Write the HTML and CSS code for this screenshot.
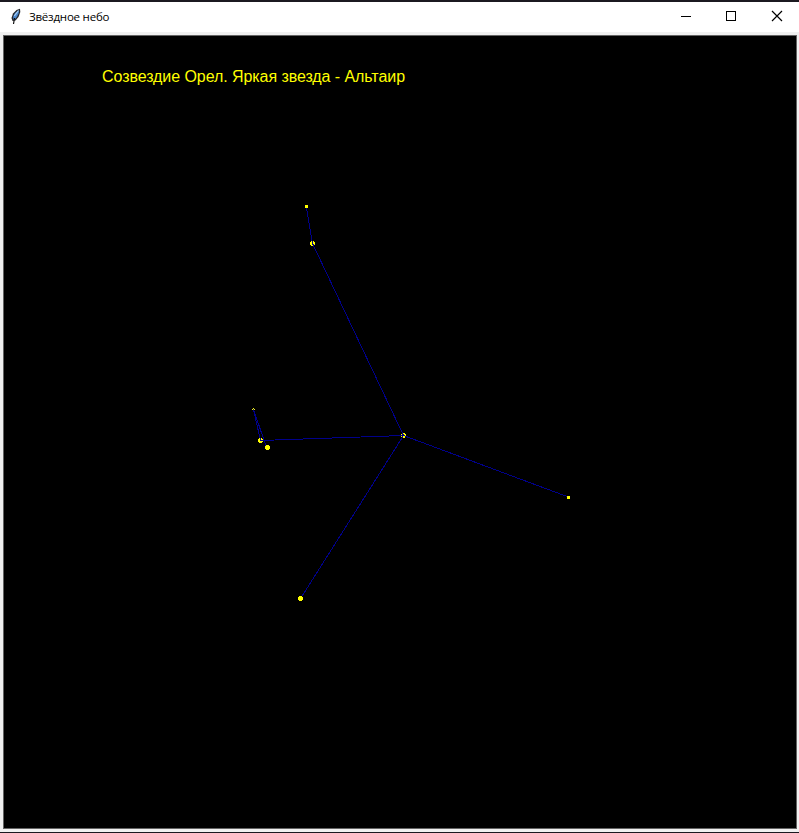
FILE: index.html
```html
<!DOCTYPE html>
<html lang="ru">
<head>
<meta charset="utf-8">
<title>Звёздное небо</title>
<link rel="stylesheet" href="styles.css">
</head>
<body>
<div class="window">
  <header class="titlebar">
    <svg class="feather" width="12" height="18" viewBox="0 0 12 18">
      <path d="M2.5 13 L1.5 10 L3 5.5 L6.5 2 L10 .8 L10.3 4 L8.5 9 L5.5 12.5 Z" fill="#26282e"/>
      <path d="M3.3 11.5 L3.2 8.5 L5 5 L8.8 2.2 L8.8 5 L7 8.8 L4.5 11.8 Z" fill="#4b88cf"/>
      <path d="M4.3 8 L8.5 2.5" stroke="#a9cff2" stroke-width="1.2"/>
      <path d="M4.5 10 L3.5 16" stroke="#111" stroke-width="1.2"/>
    </svg>
    <span class="caption">Звёздное небо</span>
    <div class="controls">
      <svg class="control" width="46" height="30" viewBox="0 0 46 30"><path d="M12 14.5H22" /></svg>
      <svg class="control" width="46" height="30" viewBox="0 0 46 30"><path d="M11.5 9.5H20.5V18.5H11.5Z" /></svg>
      <svg class="control smooth" width="46" height="30" viewBox="0 0 46 30"><path d="M11 9L21 19M21 9L11 19" /></svg>
    </div>
  </header>
  <main class="client">
    <div class="sky">
      <p class="label">Созвездие Орел. Яркая звезда - Альтаир</p>
      <svg class="map" viewBox="4 36 792 792" shape-rendering="crispEdges">
        <g class="stars">
          <rect x="305" y="205" width="3" height="3"/>
          <path d="M311 241h3v1h1v3h-1v1h-3v-1h-1v-3h1z"/>
          <path d="M253 408h1v1h-1zM252 409h1v1h-1zM254 409h1v1h-1z"/>
          <path d="M259 438h3v1h1v3h-1v1h-3v-1h-1v-3h1z"/>
          <path d="M402 433h3v1h1v3h-1v1h-3v-1h-1v-3h1z"/>
          <rect x="567" y="496" width="3" height="3"/>
        </g>
        <g class="lines">
          <path d="M306.5 208L312.5 243.5L403.5 435.5L567 496.5"/>
          <path d="M403.5 435.5L301.5 597"/>
          <path d="M403.5 435.5L260.5 440.5L253.5 409.5L266 446"/>
        </g>
        <g class="stars">
          <path d="M266 445h3v1h1v3h-1v1h-3v-1h-1v-3h1z"/>
          <path d="M299 596h3v1h1v3h-1v1h-3v-1h-1v-3h1z"/>
        </g>
      </svg>
    </div>
  </main>
</div>
</body>
</html>
```
FILE: styles.css
```css
* { box-sizing: border-box; }
body { margin: 0; background: #1b1920; }
.window {
  height: 833px;
  border-top: 2px solid #1b1920;
  border-bottom: 1px solid #1b1920;
  display: flex;
  flex-direction: column;
}
.titlebar {
  height: 30px;
  flex: none;
  padding-left: 10px;
  background: #fff;
  display: flex;
  align-items: center;
}
.feather { margin-top: -1px; }
.caption {
  margin-left: 7px;
  font: 11.5px/16px "Open Sans", "Noto Sans", sans-serif;
  letter-spacing: -0.22px;
  white-space: nowrap;
  color: #000;
}
.controls { margin-left: auto; margin-right: -8px; display: flex; }
.control { fill: none; stroke: #000; stroke-width: 1; shape-rendering: crispEdges; }
.smooth { shape-rendering: auto; stroke-width: 1.2; }
.client { flex: 1; padding: 3px 2px 3px 3px; background: #f0f0f0; }
.sky {
  position: relative;
  width: 794px;
  height: 794px;
  border: 1px solid #646464;
  background: #000;
}
.label {
  margin: 0;
  padding: 32px 0 0 98px;
  font: 16px/18px "Liberation Sans", Arial, sans-serif;
  letter-spacing: -0.065px;
  white-space: nowrap;
  color: #ff0;
}
.map { position: absolute; inset: 0; width: 792px; height: 792px; }
.stars { fill: #ff0; }
.lines { fill: none; stroke: #00008b; stroke-width: 1; }
```
